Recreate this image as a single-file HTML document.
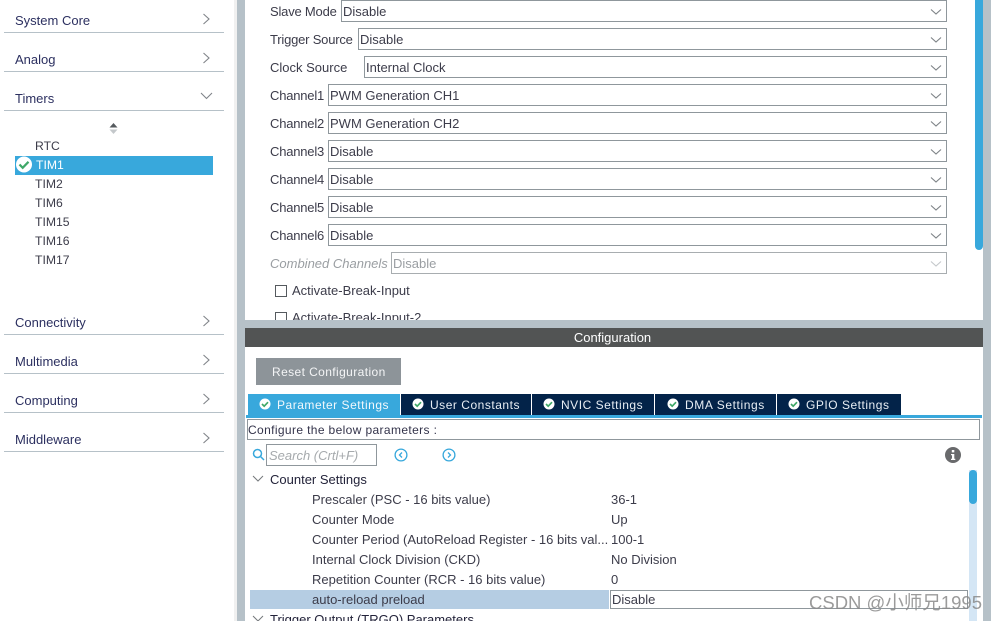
<!DOCTYPE html>
<html><head><meta charset="utf-8">
<style>
html,body{margin:0;padding:0;background:#fff}
#p{position:relative;width:996px;height:621px;overflow:hidden;background:#fff;font-family:"Liberation Sans","Noto Sans CJK SC",sans-serif;font-size:13px;color:#3c3c4a}
#p div,#p svg{position:absolute}
.t{white-space:nowrap;line-height:16px}
.sb{height:1px;left:4px;width:220px;background:#b6c1c8}
.sel{left:0;height:22px;box-sizing:border-box;border:1px solid #8f979c;background:#fff;right:auto}
.tab{top:394px;height:21px;background:#032349}
.s{color:#2c3060;left:15px}
.l{font-size:12.2px;left:35px}
.k{font-size:12px;letter-spacing:.52px}
.f{letter-spacing:-.2px}
</style></head><body><div id="p">

<!-- gray gutters -->
<div style="left:237px;top:0;width:8px;height:621px;background:#b6c1c8"></div>
<div style="left:234px;top:0;width:3px;height:621px;background:#f0f0f0"></div>
<div style="left:983px;top:0;width:8px;height:621px;background:#b6c1c8"></div>
<div style="left:245px;top:320px;width:738px;height:8px;background:#b6c1c8"></div>

<!-- sidebar -->
<div class="t s" style="top:13px">System Core</div><div class="sb" style="top:32px"></div>
<div class="t s" style="top:52px">Analog</div><div class="sb" style="top:71px"></div>
<div class="t s" style="top:91px">Timers</div><div class="sb" style="top:110px"></div>
<div class="t s" style="top:315px">Connectivity</div><div class="sb" style="top:334px"></div>
<div class="t s" style="top:354px">Multimedia</div><div class="sb" style="top:373px"></div>
<div class="t s" style="top:393px">Computing</div><div class="sb" style="top:412px"></div>
<div class="t s" style="top:432px">Middleware</div><div class="sb" style="top:451px"></div>

<svg style="left:202px;top:13px" width="9" height="12" fill="none" stroke="#808489" stroke-width="1.1"><path d="M1.500 1l5.500 5-5.500 5"/></svg>
<svg style="left:202px;top:52px" width="9" height="12" fill="none" stroke="#808489" stroke-width="1.1"><path d="M1.500 1l5.500 5-5.500 5"/></svg>
<svg style="left:200px;top:92px" width="13" height="8" fill="none" stroke="#808489" stroke-width="1.1"><path d="M1 1l5.500 5.500L12 1"/></svg>
<svg style="left:202px;top:315px" width="9" height="12" fill="none" stroke="#808489" stroke-width="1.1"><path d="M1.500 1l5.500 5-5.500 5"/></svg>
<svg style="left:202px;top:354px" width="9" height="12" fill="none" stroke="#808489" stroke-width="1.1"><path d="M1.500 1l5.500 5-5.500 5"/></svg>
<svg style="left:202px;top:393px" width="9" height="12" fill="none" stroke="#808489" stroke-width="1.1"><path d="M1.500 1l5.500 5-5.500 5"/></svg>
<svg style="left:202px;top:432px" width="9" height="12" fill="none" stroke="#808489" stroke-width="1.1"><path d="M1.500 1l5.500 5-5.500 5"/></svg>

<svg style="left:109px;top:122px" width="9" height="13"><path d="M4.500 1L8.500 5.500H.5z" fill="#555a5e"/><path d="M.5 7.500H8.500L4.500 12z" fill="#c4c8cb"/></svg>

<div class="t l" style="top:138px">RTC</div>
<div style="left:15px;top:156px;width:198px;height:19px;background:#38a8dc"></div>
<svg style="left:15px;top:156px" width="18" height="18"><circle cx="9" cy="8.500" r="8" fill="#fff"/><path d="M4.500 8.500l3.200 3.300 5.800-6" fill="none" stroke="#3fa868" stroke-width="2.200"/></svg>
<div class="t l" style="left:36px;top:157px;color:#fff">TIM1</div>
<div class="t l" style="top:176px">TIM2</div>
<div class="t l" style="top:195px">TIM6</div>
<div class="t l" style="top:214px">TIM15</div>
<div class="t l" style="top:233px">TIM16</div>
<div class="t l" style="top:252px">TIM17</div>

<!-- top form -->
<div class="t f" style="left:270px;top:4px">Slave Mode</div>
<div class="sel" style="left:341px;top:0;width:606px"></div><div class="t" style="left:343px;top:4px">Disable</div>
<div class="t f" style="left:270px;top:32px">Trigger Source</div>
<div class="sel" style="left:358px;top:28px;width:589px"></div><div class="t" style="left:360px;top:32px">Disable</div>
<div class="t" style="left:270px;top:60px">Clock Source</div>
<div class="sel" style="left:364px;top:56px;width:583px"></div><div class="t" style="left:366px;top:60px">Internal Clock</div>
<div class="t f" style="left:270px;top:88px">Channel1</div>
<div class="sel" style="left:328px;top:84px;width:619px"></div><div class="t" style="left:330px;top:88px">PWM Generation CH1</div>
<div class="t f" style="left:270px;top:116px">Channel2</div>
<div class="sel" style="left:328px;top:112px;width:619px"></div><div class="t" style="left:330px;top:116px">PWM Generation CH2</div>
<div class="t f" style="left:270px;top:144px">Channel3</div>
<div class="sel" style="left:328px;top:140px;width:619px"></div><div class="t" style="left:330px;top:144px">Disable</div>
<div class="t f" style="left:270px;top:172px">Channel4</div>
<div class="sel" style="left:328px;top:168px;width:619px"></div><div class="t" style="left:330px;top:172px">Disable</div>
<div class="t f" style="left:270px;top:200px">Channel5</div>
<div class="sel" style="left:328px;top:196px;width:619px"></div><div class="t" style="left:330px;top:200px">Disable</div>
<div class="t f" style="left:270px;top:228px">Channel6</div>
<div class="sel" style="left:328px;top:224px;width:619px"></div><div class="t" style="left:330px;top:228px">Disable</div>
<div class="t" style="left:270px;top:256px;color:#9a9ea2;font-style:italic">Combined Channels</div>
<div class="sel" style="left:391px;top:252px;width:556px;border-color:#a8adb0"></div><div class="t" style="left:393px;top:256px;color:#9a9ea2">Disable</div>

<svg style="left:930px;top:8px" width="13" height="8" fill="none" stroke="#7d8286" stroke-width="1.100"><path d="M1 1.500l5 4.500 5-4.500"/></svg>
<svg style="left:930px;top:36px" width="13" height="8" fill="none" stroke="#7d8286" stroke-width="1.100"><path d="M1 1.500l5 4.500 5-4.500"/></svg>
<svg style="left:930px;top:64px" width="13" height="8" fill="none" stroke="#7d8286" stroke-width="1.100"><path d="M1 1.500l5 4.500 5-4.500"/></svg>
<svg style="left:930px;top:92px" width="13" height="8" fill="none" stroke="#7d8286" stroke-width="1.100"><path d="M1 1.500l5 4.500 5-4.500"/></svg>
<svg style="left:930px;top:120px" width="13" height="8" fill="none" stroke="#7d8286" stroke-width="1.100"><path d="M1 1.500l5 4.500 5-4.500"/></svg>
<svg style="left:930px;top:148px" width="13" height="8" fill="none" stroke="#7d8286" stroke-width="1.100"><path d="M1 1.500l5 4.500 5-4.500"/></svg>
<svg style="left:930px;top:176px" width="13" height="8" fill="none" stroke="#7d8286" stroke-width="1.100"><path d="M1 1.500l5 4.500 5-4.500"/></svg>
<svg style="left:930px;top:204px" width="13" height="8" fill="none" stroke="#7d8286" stroke-width="1.100"><path d="M1 1.500l5 4.500 5-4.500"/></svg>
<svg style="left:930px;top:232px" width="13" height="8" fill="none" stroke="#7d8286" stroke-width="1.100"><path d="M1 1.500l5 4.500 5-4.500"/></svg>
<svg style="left:930px;top:260px" width="13" height="8" fill="none" stroke="#c4c8cb" stroke-width="1.100"><path d="M1 1.500l5 4.500 5-4.500"/></svg>

<div style="left:275px;top:285px;width:12px;height:12px;box-sizing:border-box;border:1px solid #555a5e"></div>
<div class="t" style="left:292px;top:283px">Activate-Break-Input</div>
<div style="left:275px;top:312px;width:12px;height:12px;box-sizing:border-box;border:1px solid #555a5e"></div>
<div class="t" style="left:292px;top:310px">Activate-Break-Input-2</div>
<div style="left:245px;top:320px;width:738px;height:8px;background:#b6c1c8"></div>

<div style="left:975px;top:0;width:8px;height:250px;background:#38a8dc;border-radius:0 0 4px 4px"></div>

<!-- config -->
<div style="left:245px;top:328px;width:738px;height:19px;background:#525454"></div>
<div class="t" style="left:245px;top:330px;width:735px;text-align:center;color:#fff">Configuration</div>
<div style="left:256px;top:358px;width:145px;height:27px;background:#8d9499"></div>
<div class="t" style="left:272px;top:364px;color:#f4f5f6;font-size:12px;letter-spacing:.4px">Reset Configuration</div>

<div class="tab" style="left:248px;width:152px;background:#38a8dc"></div>
<div class="tab" style="left:401px;width:130px"></div>
<div class="tab" style="left:532px;width:122px"></div>
<div class="tab" style="left:655px;width:121px"></div>
<div class="tab" style="left:777px;width:124px"></div>
<div style="left:246px;top:415px;width:736px;height:3px;background:#38a8dc"></div>

<svg style="left:259px;top:398px" width="12" height="12"><circle cx="6" cy="6" r="5.500" fill="#fff"/><path d="M3 6l2.200 2.200L9 4.200" fill="none" stroke="#3fa868" stroke-width="1.700"/></svg>
<svg style="left:412px;top:398px" width="12" height="12"><circle cx="6" cy="6" r="5.500" fill="#fff"/><path d="M3 6l2.200 2.200L9 4.200" fill="none" stroke="#3fa868" stroke-width="1.700"/></svg>
<svg style="left:543px;top:398px" width="12" height="12"><circle cx="6" cy="6" r="5.500" fill="#fff"/><path d="M3 6l2.200 2.200L9 4.200" fill="none" stroke="#3fa868" stroke-width="1.700"/></svg>
<svg style="left:667px;top:398px" width="12" height="12"><circle cx="6" cy="6" r="5.500" fill="#fff"/><path d="M3 6l2.200 2.200L9 4.200" fill="none" stroke="#3fa868" stroke-width="1.700"/></svg>
<svg style="left:788px;top:398px" width="12" height="12"><circle cx="6" cy="6" r="5.500" fill="#fff"/><path d="M3 6l2.200 2.200L9 4.200" fill="none" stroke="#3fa868" stroke-width="1.700"/></svg>

<div class="t k" style="left:277px;top:397px;color:#f2f8fc">Parameter Settings</div>
<div class="t k" style="left:430px;top:397px;color:#e8eef4">User Constants</div>
<div class="t k" style="left:561px;top:397px;color:#e8eef4">NVIC Settings</div>
<div class="t k" style="left:685px;top:397px;color:#e8eef4;letter-spacing:.6px">DMA Settings</div>
<div class="t k" style="left:806px;top:397px;color:#e8eef4">GPIO Settings</div>

<div style="left:247px;top:419px;width:733px;height:21px;box-sizing:border-box;border:1px solid #8f979c"></div>
<div class="t" style="left:248px;top:422px;font-size:12px;letter-spacing:.37px;color:#33334a">Configure the below parameters :</div>

<svg style="left:252px;top:448px" width="14" height="14" fill="none" stroke="#38a8dc" stroke-width="1.500"><circle cx="5.500" cy="5.500" r="4"/><path d="M8.500 8.500l3.500 3.500"/></svg>
<div style="left:266px;top:444px;width:111px;height:22px;box-sizing:border-box;border:1px solid #8f979c"></div>
<div class="t" style="left:269px;top:448px;color:#a6aaad;font-style:italic">Search (Crtl+F)</div>
<svg style="left:394px;top:448px" width="14" height="14" fill="none" stroke="#38a8dc" stroke-width="1.300"><circle cx="7" cy="7" r="5.900"/><path d="M8 4.500L5.500 7 8 9.500"/></svg>
<svg style="left:442px;top:448px" width="14" height="14" fill="none" stroke="#38a8dc" stroke-width="1.300"><circle cx="7" cy="7" r="5.900"/><path d="M6 4.500L8.500 7 6 9.500"/></svg>
<svg style="left:945px;top:447px" width="16" height="16"><circle cx="8" cy="8" r="8" fill="#696a6c"/><rect x="6.800" y="3" width="2.500" height="2.400" fill="#fff"/><path d="M6 7h3.300v4.700H10.300v1.300H6v-1.300h1V8.300H6z" fill="#fff"/></svg>

<svg style="left:252px;top:475px" width="12" height="8" fill="none" stroke="#75797c" stroke-width="1"><path d="M1 1l5 5 5-5"/></svg>
<div class="t" style="left:270px;top:472px;color:#23233a">Counter Settings</div>
<div class="t" style="left:312px;top:492px">Prescaler (PSC - 16 bits value)</div>
<div class="t" style="left:611px;top:492px">36-1</div>
<div class="t" style="left:312px;top:512px">Counter Mode</div>
<div class="t" style="left:611px;top:512px">Up</div>
<div class="t" style="left:312px;top:532px">Counter Period (AutoReload Register - 16 bits val...</div>
<div class="t" style="left:611px;top:532px">100-1</div>
<div class="t" style="left:312px;top:552px">Internal Clock Division (CKD)</div>
<div class="t" style="left:611px;top:552px">No Division</div>
<div class="t" style="left:312px;top:572px">Repetition Counter (RCR - 16 bits value)</div>
<div class="t" style="left:611px;top:572px">0</div>
<div style="left:250px;top:590px;width:359px;height:19px;background:#b5cde3"></div>
<div class="t" style="left:312px;top:592px">auto-reload preload</div>
<div style="left:610px;top:590px;width:358px;height:19px;box-sizing:border-box;border:1px solid #8f979c"></div>
<div class="t" style="left:612px;top:592px">Disable</div>
<svg style="left:252px;top:615px" width="12" height="6" fill="none" stroke="#75797c" stroke-width="1"><path d="M1 1l5 5 5-5"/></svg>
<div class="t" style="left:270px;top:612px;color:#23233a">Trigger Output (TRGO) Parameters</div>

<div style="left:969px;top:470px;width:8px;height:151px;background:#d4e6f5"></div>
<div style="left:969px;top:470px;width:8px;height:34px;background:#38a8dc;border-radius:4px"></div>

<div class="t" style="left:809px;top:593px;font-size:18.500px;line-height:20px;color:#8a8a8a;opacity:.85">CSDN @小师兄1995</div>
</div></body></html>
